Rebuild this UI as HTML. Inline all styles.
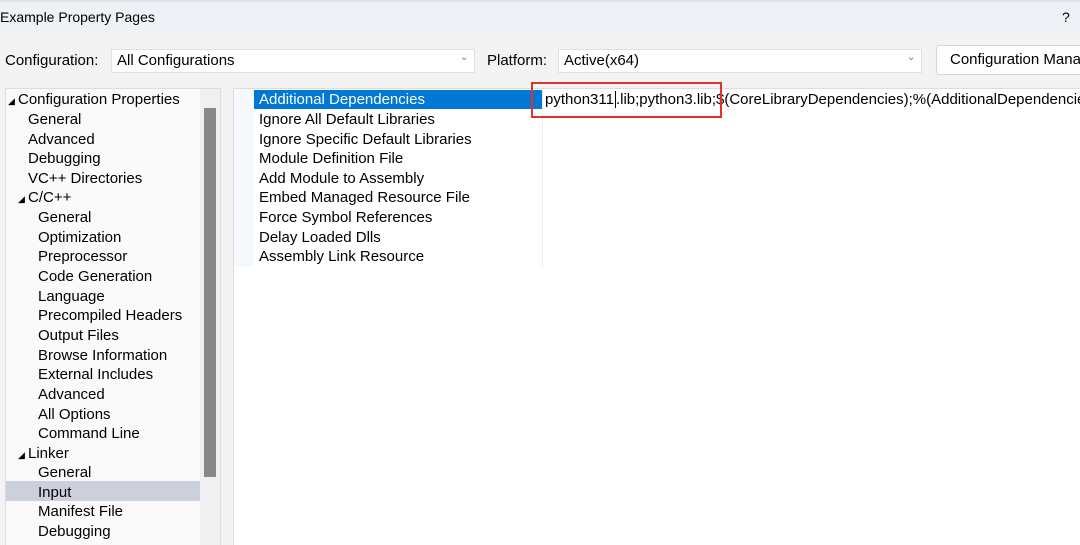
<!DOCTYPE html><html><head><style>
html,body{margin:0;width:1080px;height:545px;overflow:hidden}
body{background:#f3f3f3;font-family:"Liberation Sans",sans-serif;font-size:15px;color:#000;position:relative}
div{position:absolute;box-sizing:border-box}
.t{white-space:nowrap}
.a{font-size:9px;display:inline-block;width:10px}
</style></head><body>
<div style="left:0;top:0;width:1080px;height:34px;background:#eef2f6"></div>
<div style="left:0;top:0;width:1080px;height:2px;background:#dde4ea"></div>
<div class="t" style="left:0;top:9px;font-size:14px">Example Property Pages</div>
<div class="t" style="left:1062px;top:9px;font-size:14px">?</div>
<div class="t" style="left:5px;top:52px">Configuration:</div>
<div style="left:111px;top:49px;width:364px;height:24px;background:#fff;border:1px solid #e0e0e0"></div>
<div class="t" style="left:117px;top:52px">All Configurations</div>
<div class="t" style="left:460px;top:52px;font-size:10px;color:#777">&#8964;</div>
<div class="t" style="left:487px;top:52px">Platform:</div>
<div style="left:558px;top:49px;width:364px;height:24px;background:#fff;border:1px solid #e0e0e0"></div>
<div class="t" style="left:564px;top:52px">Active(x64)</div>
<div class="t" style="left:907px;top:52px;font-size:10px;color:#777">&#8964;</div>
<div style="left:936px;top:45px;width:160px;height:30px;background:#fdfdfd;border:1px solid #d8d8d8;border-radius:3px"></div>
<div class="t" style="left:950px;top:51px">Configuration Mana</div>
<div style="left:5px;top:88px;width:216px;height:470px;background:#fafafa;border:1px solid #ddd"></div>
<div style="left:200px;top:89px;width:20px;height:460px;background:#f0f0f0"></div>
<div style="left:204px;top:108px;width:12px;height:369px;background:#888"></div>
<div style="left:6px;top:481px;width:194px;height:20px;background:#ccd0dc"></div>
<div style="left:233px;top:88px;width:850px;height:470px;background:#fff;border:1px solid #ddd"></div>
<div style="left:234px;top:89px;width:20px;height:178px;background:#f5f8fc"></div>
<div style="left:254px;top:90px;width:288px;height:19px;background:#0078d4"></div>
<div style="left:542px;top:89px;width:1px;height:178px;background:#eee"></div>
<div class="t" style="left:259px;top:91px;color:#fff">Additional Dependencies</div>
<div class="t" style="left:545px;top:91px">python311<span style="border-left:1px solid #000;margin-left:1px"></span>.lib;python3.lib;$(CoreLibraryDependencies);%(AdditionalDependencies)</div>
<div style="left:531px;top:82px;width:191px;height:36px;border:2px solid #e53030"></div>
<div class="t" style="left:259px;top:110px;line-height:19.6px">Ignore All Default Libraries<br>Ignore Specific Default Libraries<br>Module Definition File<br>Add Module to Assembly<br>Embed Managed Resource File<br>Force Symbol References<br>Delay Loaded Dlls<br>Assembly Link Resource</div>
<div class="t" style="left:8px;top:90px;line-height:19.65px"><span class="a">&#9698;</span>Configuration Properties</div>
<div class="t" style="left:28px;top:110px;line-height:19.65px">General<br>Advanced<br>Debugging<br>VC++ Directories</div>
<div class="t" style="left:18px;top:188px;line-height:19.65px"><span class="a">&#9698;</span>C/C++</div>
<div class="t" style="left:38px;top:208px;line-height:19.65px">General<br>Optimization<br>Preprocessor<br>Code Generation<br>Language<br>Precompiled Headers<br>Output Files<br>Browse Information<br>External Includes<br>Advanced<br>All Options<br>Command Line</div>
<div class="t" style="left:18px;top:444px;line-height:19.65px"><span class="a">&#9698;</span>Linker</div>
<div class="t" style="left:38px;top:463px;line-height:19.65px">General<br>Input<br>Manifest File<br>Debugging<br>System</div>
</body></html>
